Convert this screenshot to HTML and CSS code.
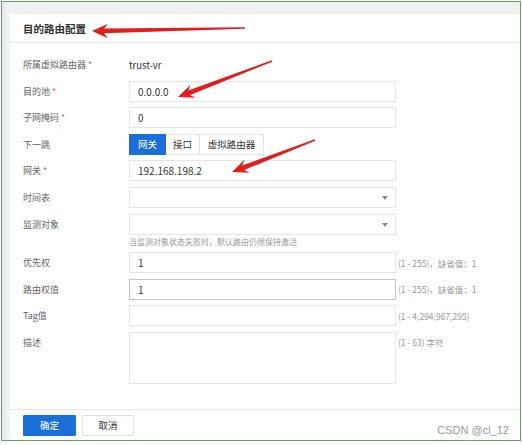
FILE: index.html
```html
<!DOCTYPE html>
<html lang="zh">
<head>
<meta charset="utf-8">
<link rel="stylesheet" href="styles.css">
</head>
<body>
<div class="frame">
  <div class="panel">
    <div class="panel-head">目的路由配置</div>
    <div class="panel-body">
      <div class="row">
        <div class="label">所属虚拟路由器 <span class="req">*</span></div>
        <div class="value">trust-vr</div>
      </div>
      <div class="row">
        <div class="label">目的地 <span class="req">*</span></div>
        <div class="input">0.0.0.0</div>
      </div>
      <div class="row">
        <div class="label">子网掩码 <span class="req">*</span></div>
        <div class="input">0</div>
      </div>
      <div class="row">
        <div class="label">下一跳</div>
        <div class="seg">
          <div class="seg-btn active">网关</div>
          <div class="seg-btn">接口</div>
          <div class="seg-btn">虚拟路由器</div>
        </div>
      </div>
      <div class="row">
        <div class="label">网关 <span class="req">*</span></div>
        <div class="input">192.168.198.2</div>
      </div>
      <div class="row">
        <div class="label">时间表</div>
        <div class="input select"><span class="caret"></span></div>
      </div>
      <div class="row row-hint">
        <div class="label">监测对象</div>
        <div class="ctrl">
          <div class="input select"><span class="caret"></span></div>
          <div class="hint">当监测对象状态失败时，默认路由仍然保持激活</div>
        </div>
      </div>
      <div class="row">
        <div class="label">优先权</div>
        <div class="input">1</div>
        <div class="tip">(1 - 255)，缺省值：1</div>
      </div>
      <div class="row">
        <div class="label">路由权值</div>
        <div class="input focus">1</div>
        <div class="tip">(1 - 255)，缺省值：1</div>
      </div>
      <div class="row">
        <div class="label">Tag值</div>
        <div class="input"></div>
        <div class="tip">(1 - 4,294,967,295)</div>
      </div>
      <div class="row row-area">
        <div class="label">描述</div>
        <div class="input area"></div>
        <div class="tip">(1 - 63) 字符</div>
      </div>
    </div>
    <div class="panel-foot">
      <div class="btn primary">确定</div>
      <div class="btn">取消</div>
    </div>
  </div>
  <div class="watermark">CSDN @cl_12</div>
</div>
<svg class="marks" width="522" height="445" viewBox="0 0 522 445">
  <polygon fill="#e31c1c" points="245,27.3 104,28.4 108,23.8 92,31 108,38.2 104,33.2 245,28.7"/>
  <polygon fill="#e31c1c" points="271.75,60.35 188.3,90.4 190.4,84.8 178,97 195.4,97.8 190.1,95 272.25,61.65"/>
  <polygon fill="#e31c1c" points="314.75,139.35 242.3,165.4 244.4,159.7 232,172 249.4,172.7 244.1,170 315.25,140.65"/>
</svg>
</body>
</html>
```
FILE: styles.css
```css
* { box-sizing: border-box; }
html, body { margin: 0; padding: 0; background: #fff; }
body {
  width: 522px;
  height: 445px;
  position: relative;
  font-family: "Noto Sans CJK SC", "Noto Sans", sans-serif;
  overflow: hidden;
}
.frame {
  position: relative;
  margin: 1px 0 0 1px;
  width: 520px;
  height: 440px;
  border: 1px solid #6a9e63;
  background: linear-gradient(to right, #e3e5e8 0px, #eef0f2 5px, #f0f1f3 8px);
  padding: 12px 0 0 8px;
}
.panel {
  background: #fff;
  height: 100%;
  display: flex;
  flex-direction: column;
}
.panel-head {
  height: 29px;
  border-bottom: 1px solid #e8e8e8;
  padding-left: 13px;
  font-size: 10.5px;
  font-weight: bold;
  color: #333;
  line-height: 30px;
}
.panel-body {
  padding: 11px 0 0 13px;
  display: flex;
  flex-direction: column;
  gap: 5.6px;
  flex: 1;
}
.row {
  display: flex;
  align-items: center;
  height: 21px;
}
.row-hint { height: auto; align-items: flex-start; }
.row-hint .label { line-height: 21px; }
.row-area { height: 52px; align-items: flex-start; }
.row-area .label, .row-area .tip { line-height: 21px; }
.label {
  width: 106px;
  flex: none;
  font-size: 9px;
  color: #666;
}
.req { color: #e25b5b; }
.value { font-size: 9.5px; color: #333; }
.ctrl { display: flex; flex-direction: column; }
.input {
  width: 267px;
  height: 21px;
  border: 1px solid #e6e6e6;
  background: #fff;
  padding-left: 8px;
  font-size: 10px;
  color: #333;
  line-height: 19px;
  position: relative;
  flex: none;
}
.input.focus { border-color: #b7c7d6; }
.input.area { height: 52px; }
.caret {
  position: absolute;
  right: 7px;
  top: 8px;
  width: 0;
  height: 0;
  border-left: 3.5px solid transparent;
  border-right: 3.5px solid transparent;
  border-top: 4px solid #8a8a8a;
}
.hint {
  font-size: 8px;
  color: #999;
  line-height: 11px;
  margin-top: 1px;
  height: 11px;
}
.tip {
  margin-left: 2px;
  font-size: 8.5px;
  color: #999;
}
.seg { display: flex; height: 21px; }
.seg-btn {
  height: 21px;
  border: 1px solid #e3e3e3;
  border-left: none;
  font-size: 9.5px;
  color: #333;
  line-height: 19px;
  text-align: center;
}
.seg-btn:nth-child(1) { width: 37px; border-left: 1px solid #1a6fd8; }
.seg-btn:nth-child(2) { width: 34px; }
.seg-btn:nth-child(3) { width: 64px; }
.seg-btn.active { background: #1a6fd8; border-color: #1a6fd8; color: #fff; }
.panel-foot {
  height: 31px;
  border-top: 1px solid #e8e8e8;
  padding: 5px 0 0 13px;
  display: flex;
  gap: 6px;
}
.btn {
  width: 52px;
  height: 21px;
  border: 1px solid #e0e0e0;
  background: #fff;
  font-size: 9.5px;
  color: #333;
  text-align: center;
  line-height: 19px;
  border-radius: 1px;
}
.btn.primary {
  width: 53px;
  background: #1a6fd8;
  border-color: #1a6fd8;
  color: #fff;
}
.watermark {
  position: absolute;
  right: 11px;
  bottom: 4px;
  font-family: "Liberation Sans", Arial, sans-serif;
  font-size: 11px;
  color: #9a9a9a;
}
.marks { position: absolute; left: 0; top: 0; pointer-events: none; }
```
